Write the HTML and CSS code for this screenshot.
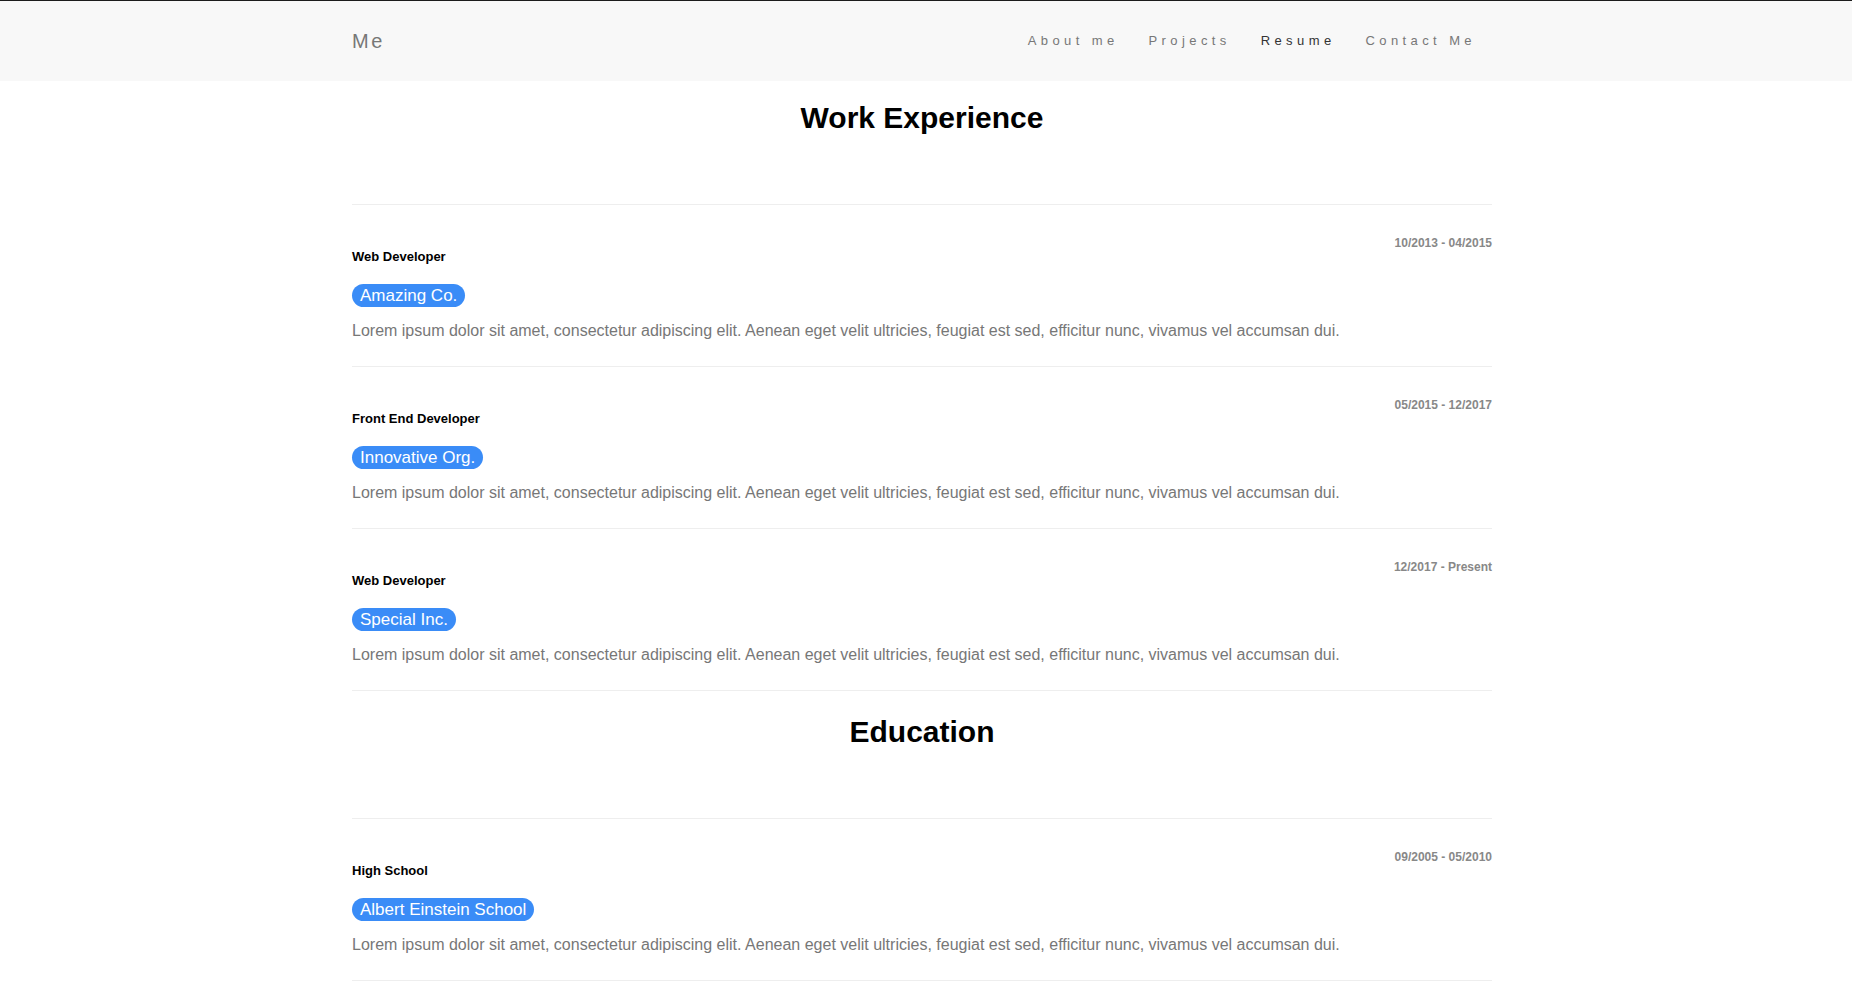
FILE: index.html
```html
<!DOCTYPE html>
<html lang="en">
<head>
<meta charset="utf-8">
<title>Me - Resume</title>
<link rel="stylesheet" href="styles.css">
</head>
<body>
<header class="navbar">
  <div class="container nav-inner">
    <a class="brand" href="#">Me</a>
    <nav class="nav-links">
      <a href="#">About me</a>
      <a href="#">Projects</a>
      <a href="#" class="active">Resume</a>
      <a href="#">Contact Me</a>
    </nav>
  </div>
</header>
<main class="container main">
  <section class="resume-section">
    <h2 class="section-title">Work Experience</h2>
    <div class="entry">
      <div class="entry-head">
        <h6 class="entry-title">Web Developer</h6>
        <span class="entry-date">10/2013 - 04/2015</span>
      </div>
      <span class="badge">Amazing Co.</span>
      <p class="entry-desc">Lorem ipsum dolor sit amet, consectetur adipiscing elit. Aenean eget velit ultricies, feugiat est sed, efficitur nunc, vivamus vel accumsan dui.</p>
    </div>
    <div class="entry">
      <div class="entry-head">
        <h6 class="entry-title">Front End Developer</h6>
        <span class="entry-date">05/2015 - 12/2017</span>
      </div>
      <span class="badge">Innovative Org.</span>
      <p class="entry-desc">Lorem ipsum dolor sit amet, consectetur adipiscing elit. Aenean eget velit ultricies, feugiat est sed, efficitur nunc, vivamus vel accumsan dui.</p>
    </div>
    <div class="entry">
      <div class="entry-head">
        <h6 class="entry-title">Web Developer</h6>
        <span class="entry-date">12/2017 - Present</span>
      </div>
      <span class="badge">Special Inc.</span>
      <p class="entry-desc">Lorem ipsum dolor sit amet, consectetur adipiscing elit. Aenean eget velit ultricies, feugiat est sed, efficitur nunc, vivamus vel accumsan dui.</p>
    </div>
  </section>
  <section class="resume-section">
    <h2 class="section-title">Education</h2>
    <div class="entry">
      <div class="entry-head">
        <h6 class="entry-title">High School</h6>
        <span class="entry-date">09/2005 - 05/2010</span>
      </div>
      <span class="badge">Albert Einstein School</span>
      <p class="entry-desc">Lorem ipsum dolor sit amet, consectetur adipiscing elit. Aenean eget velit ultricies, feugiat est sed, efficitur nunc, vivamus vel accumsan dui.</p>
    </div>
  </section>
</main>
</body>
</html>
```

FILE: styles.css
```css
html, body {
  margin: 0;
  padding: 0;
}

body {
  font-family: "Liberation Sans", Arial, Helvetica, sans-serif;
  background: #fff;
  color: #000;
}

::-webkit-scrollbar {
  width: 4px;
}
::-webkit-scrollbar-track {
  background: #f0f0f0;
}
::-webkit-scrollbar-thumb {
  background: #c1c1c1;
}

.container {
  width: 1140px;
  padding-right: 8px;
  margin: 0 auto;
}

.navbar {
  background: #f8f8f8;
  border-top: 1px solid #1c1c1c;
  height: 80px;
}

.nav-inner {
  height: 100%;
  display: flex;
  align-items: center;
  justify-content: space-between;
}

.brand {
  font-size: 20px;
  line-height: 1;
  letter-spacing: 2.5px;
  color: #777;
  text-decoration: none;
}

.nav-links {
  display: flex;
  align-items: center;
}

.nav-links a {
  padding: 0 15px;
  font-size: 13px;
  line-height: 20px;
  letter-spacing: 4.4px;
  color: #777;
  text-decoration: none;
}

.nav-links a:last-child {
  padding-right: 16px;
}

.nav-links a.active {
  color: #333;
}

.main {
  padding-bottom: 120px;
}

.resume-section + .resume-section {
  padding-top: 4px;
}

.section-title {
  margin: 20px 0 0;
  padding-bottom: 70px;
  border-bottom: 1px solid #eee;
  font-size: 30px;
  line-height: 33px;
  font-weight: bold;
  text-align: center;
  color: #000;
}

.entry {
  padding: 32px 0 23px;
  border-bottom: 1px solid #eee;
}

.entry-head {
  display: flex;
  justify-content: space-between;
  align-items: flex-start;
}

.entry-title {
  margin: 12px 0 0;
  font-size: 13px;
  line-height: 15px;
  font-weight: bold;
  color: #000;
}

.entry-date {
  font-size: 12px;
  line-height: 13px;
  font-weight: bold;
  color: #888;
}

.badge {
  display: inline-block;
  margin-top: 20px;
  padding: 0 8px;
  font-size: 17px;
  line-height: 23px;
  color: #fff;
  background: #3a8cf7;
  border-radius: 12px;
}

.entry-desc {
  margin: 12px 0 0;
  font-size: 16px;
  line-height: 24px;
  color: #777;
}
```
